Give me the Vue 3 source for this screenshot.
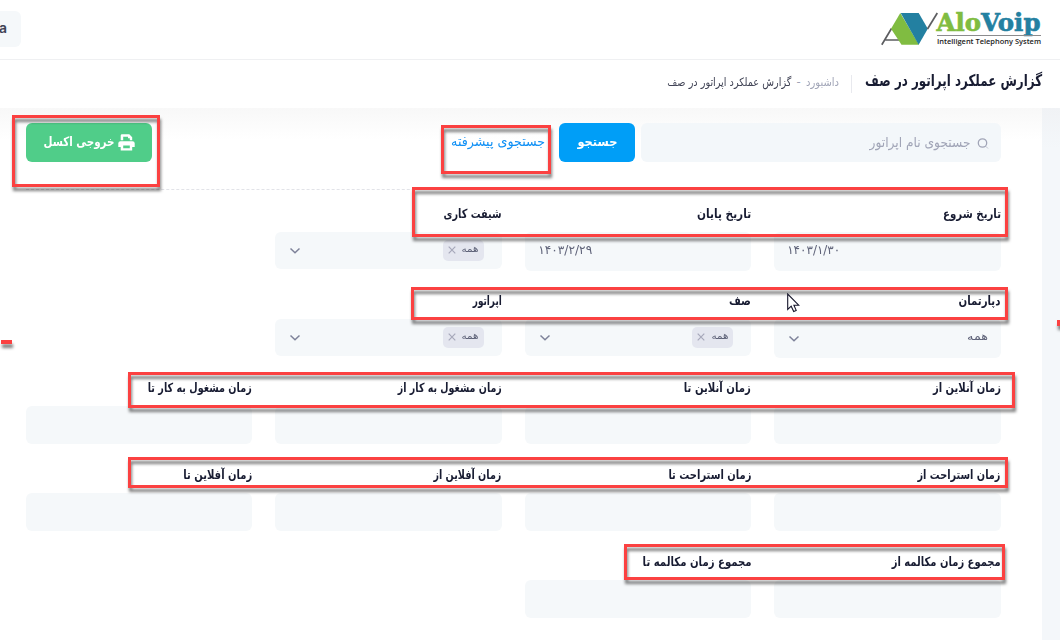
<script setup>
const rows = [
  [
    { label: 'تاریخ شروع', w: 58, type: 'date', value: '۱۴۰۳/۱/۳۰', vw: 53 },
    { label: 'تاریخ پایان', w: 54, type: 'date', value: '۱۴۰۳/۲/۲۹', vw: 54 },
    { label: 'شیفت کاری', w: 58, type: 'tags' },
  ],
  [
    { label: 'دپارتمان', w: 42, type: 'select' },
    { label: 'صف', w: 22, type: 'tags' },
    { label: 'اپراتور', w: 29, type: 'tags' },
  ],
  [
    { label: 'زمان آنلاین از', w: 68 },
    { label: 'زمان آنلاین تا', w: 67 },
    { label: 'زمان مشغول به کار از', w: 104 },
    { label: 'زمان مشغول به کار تا', w: 104 },
  ],
  [
    { label: 'زمان استراحت از', w: 83 },
    { label: 'زمان استراحت تا', w: 83 },
    { label: 'زمان آفلاین از', w: 68 },
    { label: 'زمان آفلاین تا', w: 69 },
  ],
  [
    { label: 'مجموع زمان مکالمه از', w: 109 },
    { label: 'مجموع زمان مکالمه تا', w: 109 },
  ],
]

// Condenses a right-to-left run of text to a given width.
const vFit = {
  mounted(el, { value }) {
    const natural = el.getBoundingClientRect().width
    el.style.transform = `scaleX(${value / natural})`
    el.style.marginLeft = `${value - natural}px`
  },
}
</script>

<template>
  <div class="page" dir="rtl">
    <header class="topbar">
      <svg class="logo" width="164" height="46" viewBox="0 0 164 46" direction="ltr">
        <path d="M3.800 36.700 L13.500 20.500 M7.500 32 H21" stroke="#5c5d60" stroke-width="1.700" fill="none" />
        <path d="M22.300 5 L41 36.700 H23.500 L13 20.700 Z" fill="#80bc41" />
        <path d="M22.700 5 H40.700 L49.800 20.700 L40.600 36.700 Z" fill="#2380a1" />
        <path d="M49.500 21 L59.300 5" stroke="#5c5d60" stroke-width="1.700" fill="none" />
        <text class="brand" x="58.500" y="22.500" textLength="104" lengthAdjust="spacingAndGlyphs"><tspan fill="#80bc41" stroke="#80bc41">Alo</tspan><tspan fill="#2380a1" stroke="#2380a1">Voip</tspan></text>
        <path d="M59 27.500 H163" stroke="#8b8b8d" />
        <text class="tagline" x="59" y="36" textLength="104" lengthAdjust="spacingAndGlyphs">Intelligent Telephony System</text>
      </svg>
      <div class="user">a</div>
    </header>

    <div class="toolbar">
      <h1><span v-fit="177" class="fit">گزارش عملکرد اپراتور در صف</span></h1>
      <i class="divider"></i>
      <nav class="crumbs">
        <span v-fit="33" class="fit muted">داشبورد</span>
        <span class="muted dash">-</span>
        <span v-fit="124" class="fit">گزارش عملکرد اپراتور در صف</span>
      </nav>
    </div>

    <main class="body">
      <div class="card">
        <div class="actions">
          <div class="search">
            <svg width="12" height="12" viewBox="0 0 12 12" fill="none" stroke="#a1a5b7"><circle cx="5.500" cy="6" r="4.200" stroke-width="1.300" /><path d="M8.800 9.300 L11 11.500" opacity=".6" /></svg>
            <span v-fit="101" class="fit">جستجوی نام اپراتور</span>
          </div>
          <button class="btn primary"><span v-fit="40" class="fit">جستجو</span></button>
          <a class="advanced"><span v-fit="94" class="fit">جستجوی پیشرفته</span></a>
          <button class="btn success">
            <svg width="17" height="17" viewBox="0 0 17 17" fill="#fff" fill-rule="evenodd">
              <path d="M2.700 6.300 V1.500 Q2.700 .3 4 .3 H11.300 L14.200 3.200 V6.300 H11.800 V4.300 H10 V2.700 H5.200 V6.300 Z" />
              <path d="M2.500 7.200 H14.500 Q16.700 7.200 16.700 9.200 V13 H14.200 V16.500 H2.700 V13 H.3 V9.200 Q.3 7.200 2.500 7.200 Z M5.200 11.500 V14.200 H11.800 V11.500 Z" />
            </svg>
            <span v-fit="71" class="fit">خروجی اکسل</span>
          </button>
        </div>

        <form class="filters">
          <div v-for="(row, r) in rows" :key="r" class="row">
            <div v-for="f in row" :key="f.label" class="field">
              <label><span v-fit="f.w" class="fit">{{ f.label }}</span></label>
              <div class="control" :class="f.type">
                <span v-if="f.type === 'date'" v-fit="f.vw" class="fit value">{{ f.value }}</span>
                <span v-else-if="f.type === 'select'" v-fit="21" class="fit value">همه</span>
                <span v-else-if="f.type === 'tags'" class="tag">
                  <span v-fit="17" class="fit">همه</span>
                  <svg width="8" height="8" viewBox="0 0 8 8" stroke="#a6a8ba" stroke-width="1.200"><path d="M.7 .7 L7.300 7.300 M7.300 .7 L.7 7.300" /></svg>
                </span>
                <svg v-if="f.type === 'tags' || f.type === 'select'" class="chevron" width="12" height="8" viewBox="0 0 12 8" fill="none" stroke="#7e8299" stroke-width="1.500"><path d="M1.500 1.500 L6 5.700 L10.500 1.500" /></svg>
              </div>
            </div>
          </div>
        </form>
      </div>
    </main>

    <div class="mark m-export"></div>
    <div class="mark m-advanced"></div>
    <div class="mark m-dates"></div>
    <div class="mark m-dept"></div>
    <div class="mark m-online"></div>
    <div class="mark m-rest"></div>
    <div class="mark m-talk"></div>
    <div class="mark m-left"></div>
    <div class="mark m-right"></div>
    <svg class="cursor" width="13" height="20" viewBox="0 0 13 20"><path d="M.7 1 V16.500 L4.200 13.200 L6.700 18.500 L9.200 17.400 L6.900 12.200 H11.700 Z" fill="#fff" stroke="#15152a" stroke-width="1.100" /></svg>
  </div>
</template>

<style>
body { margin: 0; overflow: hidden; }
</style>

<style scoped>
.page {
  position: relative;
  width: 1060px;
  height: 640px;
  overflow: hidden;
  background: #fff;
  color: #181c32;
  font-family: "DejaVu Sans", "Noto Sans", sans-serif;
}
.fit { display: inline-block; white-space: nowrap; transform-origin: right center; }
.topbar {
  display: flex;
  box-sizing: border-box;
  height: 60px;
  padding: 8px 18px 0 0;
  justify-content: space-between;
  border-bottom: 1px solid #eff0f2;
}
.logo { overflow: visible; }
.brand { font: bold 23.500px "DejaVu Serif", serif; stroke-width: .6px; }
.tagline { font: 600 7.500px "Open Sans", sans-serif; fill: #222; }
.user {
  box-sizing: border-box;
  width: 21px;
  height: 36px;
  margin-top: 3px;
  padding-right: 14px;
  border-radius: 0 6px 6px 0;
  background: #f5f8fa;
  color: #3f4254;
  font: 600 14px/34px Inter, sans-serif;
}
.toolbar { display: flex; height: 48px; padding-right: 18px; align-items: center; }
h1 { margin: -6px 0 0; font-size: 16px; line-height: 24px; }
.divider { width: 1px; height: 18px; margin: 0 13px 0 12px; background: #e8e9ee; }
.crumbs { display: flex; margin-top: -4px; align-items: center; font-size: 11.500px; line-height: 20px; color: #3f4254; }
.muted { color: #a1a5b7; }
.dash { width: 15px; text-align: center; }
.body {
  height: 532px;
  padding-right: 18px;
  background: linear-gradient(#f0f2f5, #f4f7fa 40px);
}
.card {
  height: 532px;
  padding: 15px 41px 0 26px;
  box-sizing: border-box;
  background: linear-gradient(#f8f8f8, #fff 32px);
}
.actions { display: flex; height: 66px; align-items: flex-start; border-bottom: 1px dashed #e2e3e8; }
.search {
  display: flex;
  box-sizing: border-box;
  width: 360px;
  height: 39px;
  padding-right: 12px;
  gap: 7px;
  align-items: center;
  border-radius: 6px;
  background: #f3f7fa;
  color: #a1a5b7;
  font-size: 13.500px;
  line-height: 34px;
}
.search .fit { margin-top: -2px; }
.btn {
  display: flex;
  height: 39px;
  padding: 0;
  align-items: center;
  justify-content: center;
  border: 0;
  border-radius: 6px;
  color: #fff;
  font: bold 13px/34px "DejaVu Sans", sans-serif;
}
.btn .fit { margin-top: -1px; }
.primary { width: 76px; margin-right: 6px; background: #009ef7; }
.success { width: 126px; margin-right: auto; gap: 3px; background: #50cd89; }
.advanced { margin-right: 14px; color: #1090f5; font-size: 13.500px; line-height: 36px; }
.filters { display: flex; margin: 14px .3px 0 0; flex-direction: column; }
.row { display: grid; grid-template-columns: repeat(4, 226.500px); height: 87px; gap: 23px; }
.field label { display: block; height: 28px; font-size: 12.500px; line-height: 20px; font-weight: bold; }
.control {
  display: flex;
  box-sizing: border-box;
  height: 38px;
  align-items: center;
  border-radius: 6px;
  background: #f5f8fa;
  color: #5e6278;
}
.value { font-size: 12px; line-height: 20px; }
.date { height: 39px; padding-left: 13px; justify-content: flex-end; }
.date .value { margin-top: -3px; }
.select { height: 39px; padding: 0 13px 0 14px; justify-content: space-between; }
.select .value { margin-top: -3px; font-size: 11px; }
.tags { height: 37px; padding: 0 18px 0 14px; justify-content: space-between; }
.tag {
  display: flex;
  box-sizing: border-box;
  width: 41px;
  height: 21px;
  margin-top: -1px;
  padding: 0 5px;
  align-items: center;
  justify-content: space-between;
  border-radius: 5px;
  background: #e4e6ef;
  font-size: 10px;
  line-height: 18px;
}
.tag .fit { margin-top: -2px; }
.chevron { flex: none; }
.mark {
  position: absolute;
  box-sizing: border-box;
  border: 3px solid #fb4141;
  filter: drop-shadow(1px 4px 1.700px rgba(0, 0, 0, .5));
}
.m-export { left: 12px; top: 115px; width: 148px; height: 72px; }
.m-advanced { left: 441px; top: 125px; width: 110px; height: 49px; }
.m-dates { left: 412px; top: 187px; width: 596px; height: 50px; }
.m-dept { left: 411px; top: 287px; width: 597px; height: 33px; }
.m-online { left: 128px; top: 372px; width: 887px; height: 36px; }
.m-rest { left: 128px; top: 457px; width: 880px; height: 31px; }
.m-talk { left: 624px; top: 544px; width: 381px; height: 36px; }
.m-left { left: 1px; top: 340px; width: 11px; height: 4px; border-width: 2px; }
.m-right { left: 1057px; top: 320px; width: 8px; height: 5px; }
.cursor { position: absolute; left: 787px; top: 293px; }
</style>
